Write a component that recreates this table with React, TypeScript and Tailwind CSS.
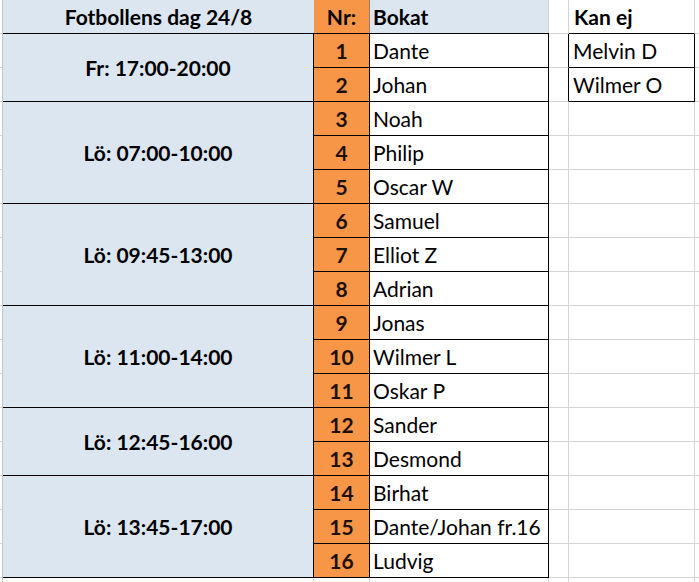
const groups = [
  { label: "Fr: 17:00-20:00", rows: [[1, "Dante"], [2, "Johan"]] },
  { label: "Lö: 07:00-10:00", rows: [[3, "Noah"], [4, "Philip"], [5, "Oscar W"]] },
  { label: "Lö: 09:45-13:00", rows: [[6, "Samuel"], [7, "Elliot Z"], [8, "Adrian"]] },
  { label: "Lö: 11:00-14:00", rows: [[9, "Jonas"], [10, "Wilmer L"], [11, "Oskar P"]] },
  { label: "Lö: 12:45-16:00", rows: [[12, "Sander"], [13, "Desmond"]] },
  { label: "Lö: 13:45-17:00", rows: [[14, "Birhat"], [15, "Dante/Johan fr.16"], [16, "Ludvig"]] },
] as const;

const kanEj = ["Melvin D", "Wilmer O"];
const ROWS = 18;
const rowIdx = Array.from({ length: ROWS }, (_, i) => i);

export default function App() {
  return (
    <div
      className="w-[699px] h-[582px] overflow-hidden bg-white flex text-black text-[21px] leading-none"
      style={{ fontFamily: "Lato, 'Open Sans', sans-serif" }}
    >
      {/* gutter: edge of the previous column */}
      <div className="w-[3px] shrink-0 flex flex-col border-r border-[#c6c6c6]">
        {rowIdx.map((i) => (
          <div key={i} className="h-[34px] shrink-0 border-b border-[#d4d4d4]" />
        ))}
      </div>

      {/* main schedule */}
      <div className="w-[546px] shrink-0 flex flex-col">
        <div className="h-[34px] shrink-0 flex border-b border-black">
          <div className="w-[311px] bg-[#dce6f1] flex items-center justify-center font-bold">
            Fotbollens dag 24/8
          </div>
          <div className="w-[56px] bg-[#f79646] flex items-center justify-center font-bold border-r border-[#9a7a60]">
            Nr:
          </div>
          <div className="w-[179px] bg-[#dce6f1] flex items-center pl-[3px] font-bold border-r border-[#d4d4d4]">
            Bokat
          </div>
        </div>

        {groups.map((g) => (
          <div key={g.label} className="flex shrink-0">
            <div className="w-[311px] bg-[#dce6f1] flex items-center justify-center font-bold border-r border-b border-black">
              {g.label}
            </div>
            <div className="flex flex-col">
              {g.rows.map(([nr, name]) => (
                <div key={nr} className="h-[34px] flex">
                  <div className="w-[56px] bg-[#f79646] flex items-center justify-center font-bold text-[#1c1008] border-r border-b border-black">
                    {nr}
                  </div>
                  <div className="w-[179px] bg-white flex items-center pl-[3px] border-r border-b border-black whitespace-nowrap">
                    {name}
                  </div>
                </div>
              ))}
            </div>
          </div>
        ))}

        <div className="flex-1 flex">
          <div className="w-[311px] border-r border-[#d4d4d4]" />
          <div className="w-[56px] border-r border-[#d4d4d4]" />
          <div className="w-[179px] border-r border-[#d4d4d4]" />
        </div>
      </div>

      {/* empty spacer column */}
      <div className="w-[20px] shrink-0 flex flex-col">
        {rowIdx.map((i) => (
          <div
            key={i}
            className={`h-[34px] shrink-0 border-b border-r border-b-[#d4d4d4] ${
              i === 1 || i === 2 ? "border-r-black" : "border-r-[#d4d4d4]"
            }`}
          />
        ))}
      </div>

      {/* Kan ej */}
      <div className="w-[126px] shrink-0 flex flex-col">
        {rowIdx.map((i) => (
          <div
            key={i}
            className={`h-[34px] shrink-0 flex items-center pl-[4px] border-b border-r ${
              i <= 2 ? "border-b-black" : "border-b-[#d4d4d4]"
            } ${i === 1 || i === 2 ? "border-r-black" : "border-r-[#d4d4d4]"} ${
              i === 0 ? "font-bold pl-[5px]" : ""
            }`}
          >
            {i === 0 ? "Kan ej" : kanEj[i - 1] ?? ""}
          </div>
        ))}
      </div>

      <div className="flex-1 flex flex-col">
        {rowIdx.map((i) => (
          <div key={i} className="h-[34px] shrink-0 border-b border-[#d4d4d4]" />
        ))}
      </div>
    </div>
  );
}
